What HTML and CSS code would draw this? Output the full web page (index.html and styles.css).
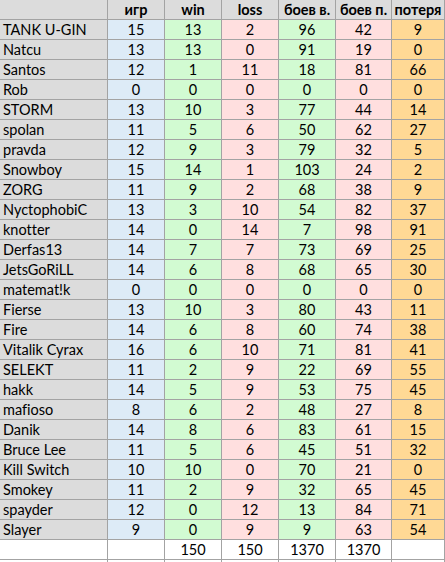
FILE: index.html
```html
<!DOCTYPE html>
<html lang="ru">
<head>
<meta charset="utf-8">
<title>Таблица</title>
<link rel="stylesheet" href="styles.css">
</head>
<body>
<div class="sheet">
  <div class="row head"><div class="c name"></div><div class="c">игр</div><div class="c">win</div><div class="c">loss</div><div class="c">боев в.</div><div class="c">боев п.</div><div class="c">потеря</div></div>
  <div class="row"><div class="c name">TANK U-GIN</div><div class="c">15</div><div class="c">13</div><div class="c">2</div><div class="c">96</div><div class="c">42</div><div class="c">9</div></div>
  <div class="row"><div class="c name">Natcu</div><div class="c">13</div><div class="c">13</div><div class="c">0</div><div class="c">91</div><div class="c">19</div><div class="c">0</div></div>
  <div class="row"><div class="c name">Santos</div><div class="c">12</div><div class="c">1</div><div class="c">11</div><div class="c">18</div><div class="c">81</div><div class="c">66</div></div>
  <div class="row"><div class="c name">Rob</div><div class="c">0</div><div class="c">0</div><div class="c">0</div><div class="c">0</div><div class="c">0</div><div class="c">0</div></div>
  <div class="row"><div class="c name">STORM</div><div class="c">13</div><div class="c">10</div><div class="c">3</div><div class="c">77</div><div class="c">44</div><div class="c">14</div></div>
  <div class="row"><div class="c name">spolan</div><div class="c">11</div><div class="c">5</div><div class="c">6</div><div class="c">50</div><div class="c">62</div><div class="c">27</div></div>
  <div class="row"><div class="c name">pravda</div><div class="c">12</div><div class="c">9</div><div class="c">3</div><div class="c">79</div><div class="c">32</div><div class="c">5</div></div>
  <div class="row"><div class="c name">Snowboy</div><div class="c">15</div><div class="c">14</div><div class="c">1</div><div class="c">103</div><div class="c">24</div><div class="c">2</div></div>
  <div class="row"><div class="c name">ZORG</div><div class="c">11</div><div class="c">9</div><div class="c">2</div><div class="c">68</div><div class="c">38</div><div class="c">9</div></div>
  <div class="row"><div class="c name">NyctophobiC</div><div class="c">13</div><div class="c">3</div><div class="c">10</div><div class="c">54</div><div class="c">82</div><div class="c">37</div></div>
  <div class="row"><div class="c name">knotter</div><div class="c">14</div><div class="c">0</div><div class="c">14</div><div class="c">7</div><div class="c">98</div><div class="c">91</div></div>
  <div class="row"><div class="c name">Derfas13</div><div class="c">14</div><div class="c">7</div><div class="c">7</div><div class="c">73</div><div class="c">69</div><div class="c">25</div></div>
  <div class="row"><div class="c name">JetsGoRiLL</div><div class="c">14</div><div class="c">6</div><div class="c">8</div><div class="c">68</div><div class="c">65</div><div class="c">30</div></div>
  <div class="row"><div class="c name">matemat!k</div><div class="c">0</div><div class="c">0</div><div class="c">0</div><div class="c">0</div><div class="c">0</div><div class="c">0</div></div>
  <div class="row"><div class="c name">Fierse</div><div class="c">13</div><div class="c">10</div><div class="c">3</div><div class="c">80</div><div class="c">43</div><div class="c">11</div></div>
  <div class="row"><div class="c name">Fire</div><div class="c">14</div><div class="c">6</div><div class="c">8</div><div class="c">60</div><div class="c">74</div><div class="c">38</div></div>
  <div class="row"><div class="c name">Vitalik Cyrax</div><div class="c">16</div><div class="c">6</div><div class="c">10</div><div class="c">71</div><div class="c">81</div><div class="c">41</div></div>
  <div class="row"><div class="c name">SELEKT</div><div class="c">11</div><div class="c">2</div><div class="c">9</div><div class="c">22</div><div class="c">69</div><div class="c">55</div></div>
  <div class="row"><div class="c name">hakk</div><div class="c">14</div><div class="c">5</div><div class="c">9</div><div class="c">53</div><div class="c">75</div><div class="c">45</div></div>
  <div class="row"><div class="c name">mafioso</div><div class="c">8</div><div class="c">6</div><div class="c">2</div><div class="c">48</div><div class="c">27</div><div class="c">8</div></div>
  <div class="row"><div class="c name">Danik</div><div class="c">14</div><div class="c">8</div><div class="c">6</div><div class="c">83</div><div class="c">61</div><div class="c">15</div></div>
  <div class="row"><div class="c name">Bruce Lee</div><div class="c">11</div><div class="c">5</div><div class="c">6</div><div class="c">45</div><div class="c">51</div><div class="c">32</div></div>
  <div class="row"><div class="c name">Kill Switch</div><div class="c">10</div><div class="c">10</div><div class="c">0</div><div class="c">70</div><div class="c">21</div><div class="c">0</div></div>
  <div class="row"><div class="c name">Smokey</div><div class="c">11</div><div class="c">2</div><div class="c">9</div><div class="c">32</div><div class="c">65</div><div class="c">45</div></div>
  <div class="row"><div class="c name">spayder</div><div class="c">12</div><div class="c">0</div><div class="c">12</div><div class="c">13</div><div class="c">84</div><div class="c">71</div></div>
  <div class="row"><div class="c name">Slayer</div><div class="c">9</div><div class="c">0</div><div class="c">9</div><div class="c">9</div><div class="c">63</div><div class="c">54</div></div>
  <div class="row total"><div class="c name"></div><div class="c"></div><div class="c">150</div><div class="c">150</div><div class="c">1370</div><div class="c">1370</div><div class="c"></div></div>
  <div class="row total"><div class="c name"></div><div class="c"></div><div class="c"></div><div class="c"></div><div class="c"></div><div class="c"></div><div class="c"></div></div>
</div>
</body>
</html>
```

FILE: styles.css
```css
html, body {
  margin: 0;
  padding: 0;
  background: #ffffff;
}

.sheet {
  width: 445px;
  font-family: "Lato", "Liberation Sans", sans-serif;
  font-size: 14.5px;
  font-variant-ligatures: none;
  font-feature-settings: "liga" 0, "clig" 0;
  color: #000000;
}

.row {
  display: grid;
  grid-template-columns: 108px 57px 57px 57px 57px 56px 53px;
  height: 20px;
}

.c {
  box-sizing: border-box;
  height: 20px;
  border-right: 1px solid #a3a3a3;
  border-bottom: 1px solid #a3a3a3;
  text-align: center;
  line-height: 20px;
  white-space: nowrap;
  overflow: hidden;
}

.c.name {
  text-align: left;
  padding-left: 3px;
  background: #dcdcdc;
}

.row .c:nth-child(2) { background: #ddebf7; }
.row .c:nth-child(3) { background: #d2fbd2; }
.row .c:nth-child(4) { background: #ffdfdf; }
.row .c:nth-child(5) { background: #d2fbd2; }
.row .c:nth-child(6) { background: #ffdfdf; }
.row .c:nth-child(7) { background: #ffd995; }

.row.head .c {
  background: #dcdcdc;
  font-weight: bold;
}

.row.total .c {
  background: #ffffff;
}
```
